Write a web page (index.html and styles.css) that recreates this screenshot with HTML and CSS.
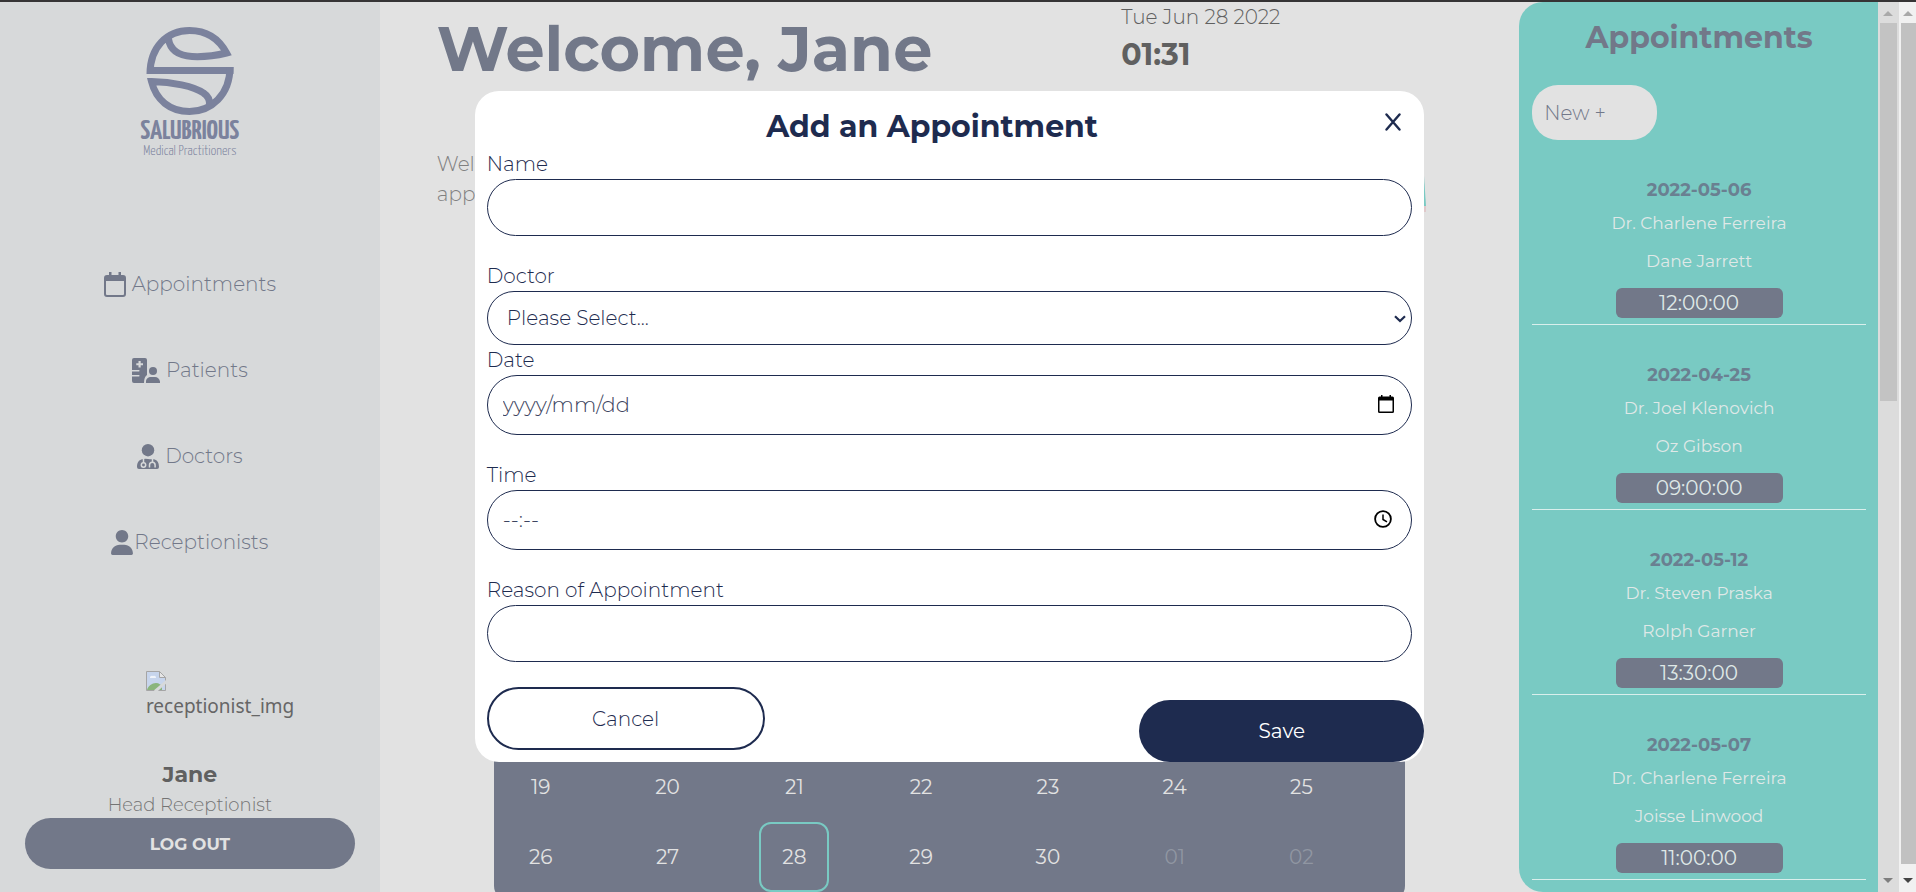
FILE: index.html
```html
<!DOCTYPE html>
<html lang="en">
<head>
<meta charset="utf-8">
<meta name="viewport" content="width=device-width, initial-scale=1">
<title>Salubrious Medical Practitioners</title>
<link rel="stylesheet" href="styles.css">
</head>
<body>
<div class="page">
  <aside class="sidebar">
    <div class="logo">
      <svg class="logo-mark" viewBox="0 0 88 88" aria-hidden="true">
        <g fill="none" stroke="currentColor" stroke-width="7">
          <path d="M3.500 43.500H87.500M4 47C4 20 21 3.500 43.500 3.500C61 3.500 73 12 80.500 26C68 29 56 30 46 29.500C31 28.500 24 22 22.500 12"/>
          <path d="M84 40C84 68 65 84.500 43.500 84.500C24 84.500 10 73 5.500 54.500C26 55 48 59 57.500 66C62 69 64 73 63.500 78"/>
        </g>
      </svg>
      <span class="logo-name">SALUBRIOUS</span>
      <span class="logo-tag">Medical Practitioners</span>
    </div>
    <nav class="nav">
      <a class="nav-link" href="#"><svg width="22" height="25" viewBox="0 0 22 25" aria-hidden="true"><path fill="currentColor" fill-rule="evenodd" d="M5 0h2.500v3h7V0H17v3h2a3 3 0 0 1 3 3v16a3 3 0 0 1-3 3H3a3 3 0 0 1-3-3V6a3 3 0 0 1 3-3h2zM2 9v13a1 1 0 0 0 1 1h16a1 1 0 0 0 1-1V9z"/></svg>Appointments</a>
      <a class="nav-link" href="#"><svg width="28" height="25" viewBox="0 0 28 25" aria-hidden="true"><path fill="currentColor" fill-rule="evenodd" d="M2 0h11a2 2 0 0 1 2 2v15q-3 2-3 8H2a2 2 0 0 1-2-2v-4.500h7a.8.8 0 0 0 0-1.500H0v-3.500h7a.8.8 0 0 0 0-1.500H0V2a2 2 0 0 1 2-2zM6.500 3v2.200H4.300v2H6.500v2.200h2.200V7.200H11v-2H8.700V3z"/><circle fill="currentColor" cx="21" cy="13" r="4"/><path fill="currentColor" d="M14 25c-.5-4 2-6 5-6h4c3 0 5.500 3 5 6z"/></svg>Patients</a>
      <a class="nav-link" href="#"><svg width="22" height="25" viewBox="0 0 22 25" aria-hidden="true"><circle fill="currentColor" cx="11" cy="6.200" r="6.200"/><path fill="currentColor" d="M5 15.200Q8 14.500 11 15t6 .2c3.500.8 5 4 5 7.800q0 2-2 2H2q-2 0-2-2c0-3.800 1.500-7 5-7.800z"/><g fill="none" stroke="#d7d9da" stroke-width="1.500"><path d="M6.500 15v4M15.500 15v3"/><circle cx="6.500" cy="21" r="2.200"/><path d="M12.500 23.500v-2.500a2.800 2.800 0 0 1 5.600 0v2.500"/></g></svg>Doctors</a>
      <a class="nav-link tight" href="#"><svg width="22" height="25" viewBox="0 0 448 512" aria-hidden="true"><path fill="currentColor" d="M224 256c70.700 0 128-57.300 128-128S294.700 0 224 0 96 57.300 96 128s57.300 128 128 128zm-45.700 48C79.800 304 0 383.800 0 482.300 0 498.700 13.300 512 29.700 512h388.600c16.400 0 29.700-13.300 29.700-29.700C448 383.800 368.200 304 269.700 304z"/></svg>Receptionists</a>
    </nav>
    <div class="profile">
      <div class="avatar">
        <svg width="20" height="20" viewBox="0 0 20 20" aria-hidden="true"><path fill="#c7d5ec" stroke="#a5a5a5" d="M.5.5h13l6 6v13H.5z"/><path fill="#f0f4fa" d="M4 7a2 2 0 0 1 3-2 2 2 0 0 1 3 2z"/><path fill="#8ab57c" d="M1 19c1-4 5-7 9-7 3 0 5 2 6 3v4z"/><path fill="#e6e6e6" stroke="#a5a5a5" d="M13.500.5v6h6z"/><path stroke="#d7d9da" stroke-width="3" d="M9 20.500 21 10"/></svg>
        <span>receptionist_img</span>
      </div>
      <strong class="profile-name">Jane</strong>
      <span class="profile-role">Head Receptionist</span>
      <button class="logout" type="button">LOG OUT</button>
    </div>
  </aside>

  <main class="main">
    <header class="hero">
      <h1>Welcome, Jane</h1>
      <div class="clock"><span class="clock-date">Tue Jun 28 2022</span><strong class="clock-time">01:31</strong></div>
    </header>
    <section class="banner">
      <p>Wel<br>app</p>
      <svg class="banner-art" width="4" height="36" viewBox="0 0 4 36" aria-hidden="true"><path fill="#79cac3" d="M0 0h2l2 30H0z"/><path fill="#e0c8ca" d="M0 30h4v6H0z"/></svg>
    </section>
    <section class="calendar">
      <span>19</span><span>20</span><span>21</span><span>22</span><span>23</span><span>24</span><span>25</span>
      <span>26</span><span>27</span><span class="today">28</span><span>29</span><span>30</span><span class="other">01</span><span class="other">02</span>
    </section>
  </main>

  <aside class="rail">
    <section class="appointments">
      <h2>Appointments</h2>
      <button class="new" type="button">New +</button>
      <article class="visit"><strong>2022-05-06</strong><span>Dr. Charlene Ferreira</span><span>Dane Jarrett</span><time>12:00:00</time></article>
      <article class="visit"><strong>2022-04-25</strong><span>Dr. Joel Klenovich</span><span>Oz Gibson</span><time>09:00:00</time></article>
      <article class="visit"><strong>2022-05-12</strong><span>Dr. Steven Praska</span><span>Rolph Garner</span><time>13:30:00</time></article>
      <article class="visit"><strong>2022-05-07</strong><span>Dr. Charlene Ferreira</span><span>Joisse Linwood</span><time>11:00:00</time></article>
    </section>
    <div class="scroll inner" aria-hidden="true">
      <i class="up"></i><div class="track"><div class="thumb"></div></div><i class="down"></i>
    </div>
  </aside>
  <div class="scroll outer" aria-hidden="true">
    <i class="up"></i><div class="track"><div class="thumb"></div></div><i class="down"></i>
  </div>

  <div class="overlay">
    <form class="modal">
      <div class="modal-head">
        <h2>Add an Appointment</h2>
        <button class="close" type="button" aria-label="Close"><svg width="16" height="18" viewBox="0 0 16 18" aria-hidden="true"><path fill="none" stroke="currentColor" stroke-width="2.400" stroke-linecap="round" d="M1.500 1.500 14.500 16.500M14.500 1.500 1.500 16.500"/></svg></button>
      </div>
      <div class="fields">
        <label for="name">Name</label>
        <input class="control" id="name" type="text">
        <label class="spaced" for="doctor">Doctor</label>
        <div class="field">
          <select class="control select" id="doctor"><option>Please Select...</option></select>
          <svg class="chevron" width="12" height="8" viewBox="0 0 12 8" aria-hidden="true"><path fill="none" stroke="currentColor" stroke-width="2.200" d="M1 1.200 6 6l5-4.800"/></svg>
        </div>
        <label for="date">Date</label>
        <div class="field">
          <input class="control tall" id="date" type="text" placeholder="yyyy/mm/dd">
          <svg class="picker" width="16" height="18" viewBox="0 0 16 18" aria-hidden="true"><path fill="#000" fill-rule="evenodd" d="M3 0h1.500v1.500h7V0H13v1.500h1.500A1.500 1.500 0 0 1 16 3v13.500a1.500 1.500 0 0 1-1.500 1.500h-13A1.500 1.500 0 0 1 0 16.500V3a1.500 1.500 0 0 1 1.500-1.500H3zM1.500 5.500v11h13v-11z"/></svg>
        </div>
        <label class="spaced" for="time">Time</label>
        <div class="field">
          <input class="control tall" id="time" type="text" placeholder="--:--">
          <svg class="picker clock-icon" width="18" height="18" viewBox="0 0 18 18" aria-hidden="true"><g fill="none" stroke="#000"><circle cx="9" cy="9" r="7.900" stroke-width="1.800"/><path stroke-width="1.500" d="M9 4.500v5l4 2.300"/></g></svg>
        </div>
        <label class="spaced" for="reason">Reason of Appointment</label>
        <input class="control" id="reason" type="text">
      </div>
      <div class="actions">
        <button class="cancel" type="button">Cancel</button>
        <button class="save" type="submit">Save</button>
      </div>
    </form>
  </div>
</div>
</body>
</html>
```
FILE: styles.css
```css
:root {
  --navy: #1e2b4f;
  --slate: #727889;
  --teal: #79cac3;
  --paper: #e2e2e2;
}
* { box-sizing: border-box; }
body {
  margin: 0;
  background: var(--paper);
  font-family: Montserrat, Inter, sans-serif;
  font-size: 20px;
  font-weight: 300;
  color: var(--slate);
}
button, input, select { font: inherit; }
button { cursor: pointer; }
h1, h2, p { margin: 0; }

.page {
  position: relative;
  display: grid;
  grid-template-columns: minmax(0, 1fr) minmax(0, 3fr) minmax(0, 1fr) 17px;
  height: 100vh;
  border-top: 2px solid #363435;
  overflow: hidden;
}

/* Sidebar */
.sidebar {
  display: flex;
  flex-direction: column;
  align-items: center;
  justify-content: space-between;
  padding: 25px 25px 23px;
  background: #d7d9da;
}
.logo {
  display: flex;
  flex-direction: column;
  align-items: center;
  color: #7b829d;
}
.logo-mark { width: 88px; height: 88px; }
.logo-name {
  margin-top: 4px;
  font: bold 28px/26px "Yanone Kaffeesatz", "Liberation Sans", sans-serif;
}
.logo-tag { font: 300 14px/14px "Yanone Kaffeesatz", "Liberation Sans", sans-serif; }
.nav {
  display: flex;
  flex-direction: column;
  align-items: center;
  gap: 60px;
  padding-bottom: 4px;
}
.nav-link {
  display: flex;
  align-items: center;
  gap: 6px;
  line-height: 26px;
  color: var(--slate);
  text-decoration: none;
}
.tight { gap: 1px; }
.profile {
  display: flex;
  flex-direction: column;
  align-items: center;
  align-self: stretch;
}
.avatar {
  display: flex;
  flex-direction: column;
  width: 88px;
  font: 19px/30px "Noto Sans", sans-serif;
  color: #666;
  white-space: nowrap;
}
.profile-name {
  margin-top: 37px;
  font-size: 22px;
  line-height: 34px;
  font-weight: 700;
  color: #606060;
}
.profile-role { font-size: 18px; line-height: 26px; color: #747474; }
.logout {
  width: 100%;
  height: 51px;
  border: 0;
  border-radius: 26px;
  background: var(--slate);
  color: #e2e2e2;
  font-size: 17px;
  font-weight: 700;
}

/* Main */
.main {
  display: flex;
  flex-direction: column;
  padding: 0 93px 0 57px;
}
.hero { display: flex; justify-content: space-between; }
h1 { padding-top: 9px; font-size: 62px; line-height: 76px; font-weight: 700; white-space: nowrap; }
.clock { display: flex; flex-direction: column; width: 305px; color: #606060; }
.clock-date { line-height: 30px; }
.clock-time { font-size: 30px; line-height: 46px; font-weight: 700; }
.banner { position: relative; margin-top: 62px; line-height: 30px; color: #808080; }
.banner-art { position: absolute; top: 27px; right: 0; }
.calendar {
  display: grid;
  grid-template-columns: repeat(7, minmax(0, 1fr));
  align-content: end;
  flex: 1;
  margin: 60px 21px -8px 57px;
  padding: 0 12px 8px;
  border-radius: 14px;
  background: var(--slate);
  color: var(--paper);
  font-weight: 400;
}
.calendar span { width: 70px; line-height: 70px; text-align: center; }
.calendar .today { border: 2px solid var(--teal); border-radius: 12px; line-height: 66px; }
.calendar .other { color: #9096a2; }

/* Appointment list */
.rail { display: flex; }
.appointments {
  flex: 1;
  display: flex;
  flex-direction: column;
  padding: 0 12px 0 13px;
  border-radius: 24px 0 0 24px;
  background: var(--teal);
}
.appointments h2 { margin: 16px 0 27px; font-size: 30px; line-height: 40px; font-weight: 700; text-align: center; }
.new {
  width: 125px;
  height: 55px;
  padding: 0 12px;
  border: 0;
  border-radius: 26px;
  background: var(--paper);
  color: var(--slate);
  text-align: left;
}
.visit {
  display: flex;
  flex-direction: column;
  align-items: center;
  padding: 39px 0 6px;
  border-bottom: 1px solid #d9efec;
  color: #dfe8e7;
  font-size: 17px;
  line-height: 22px;
  font-weight: 400;
}
.visit strong { margin-bottom: 11px; color: #6a8091; font-size: 18px; font-weight: 700; }
.visit span { margin-bottom: 16px; }
.visit time {
  width: 50%;
  border-radius: 6px;
  background: var(--slate);
  font-size: 20px;
  line-height: 30px;
  text-align: center;
}

/* Scroll bars */
.scroll { display: flex; flex-direction: column; align-items: center; padding: 9px 2px; }
.scroll i { border: 5px solid transparent; }
.scroll .up { border-top: 0; border-bottom-color: #a9a9a9; }
.scroll .down { border-bottom: 0; border-top-color: #7f7f7f; }
.track { flex: 1; align-self: stretch; margin: 7px 0 14px; }
.inner { width: 21px; background: #dcdcdc; }
.inner .thumb { height: 45%; background: #c3c3c3; }
.outer { padding: 9px 0 9px 2px; background: #f1f1f1; }
.outer .thumb { height: 100%; background: #c1c1c1; }
.outer .down { border-top-color: #444; }

/* Modal */
.overlay {
  position: absolute;
  inset: 0 17px 0 0;
  display: flex;
  align-items: flex-start;
  justify-content: center;
}
.modal {
  width: 50%;
  margin-top: 89px;
  border-radius: 24px;
  background: #fff;
  color: var(--navy);
}
.modal-head { display: flex; align-items: flex-start; padding: 16px 15px 0 12px; }
.modal-head h2 { flex: 1; font-size: 30px; line-height: 40px; font-weight: 700; text-align: center; }
.close {
  display: flex;
  padding: 6px 8px;
  border: 0;
  background: none;
  color: var(--navy);
}
.fields { display: flex; flex-direction: column; padding: 2px 12px 0; }
.fields label { line-height: 30px; }
.fields .spaced { margin-top: 25px; }
.field { position: relative; }
.control {
  display: block;
  width: 100%;
  height: 57px;
  padding: 0 15px;
  border: 1px solid var(--navy);
  border-radius: 30px;
  background: #fff;
  color: var(--navy);
}
.select { height: 54px; padding: 0 19px; appearance: none; }
.tall { height: 60px; padding-bottom: 2px; font-size: 21px; }
.control::placeholder { color: #3d4560; opacity: 1; }
.chevron { position: absolute; top: 24px; right: 6px; }
.picker { position: absolute; top: 20px; right: 18px; }
.clock-icon { right: 20px; }
.actions {
  display: flex;
  justify-content: space-between;
  margin-top: 25px;
}
.cancel {
  width: calc(30% - 7px);
  height: 63px;
  margin-left: 12px;
  border: 2px solid var(--navy);
  border-radius: 32px;
  background: #fff;
  color: var(--navy);
}
.save {
  width: 30%;
  height: 62px;
  margin-top: 13px;
  border: 0;
  border-radius: 31px;
  background: var(--navy);
  color: #fff;
  font-weight: 400;
}
```
